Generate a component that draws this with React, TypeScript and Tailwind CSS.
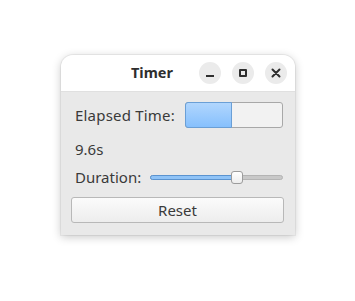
import React from "react";

export default function App() {
  return (
    <div className="w-[355px] h-[301px] bg-white pt-[55px] pl-[61px]" style={{ fontFamily: '"Noto Sans", "DejaVu Sans", sans-serif' }}>
      <div className="w-[234px] h-[180px] rounded-t-[12px] bg-[#e9e9e9] shadow-[0_2px_10px_rgba(0,0,0,0.22),0_0_0_1px_rgba(0,0,0,0.05)] flex flex-col overflow-hidden">
        <div className="h-[36px] bg-white flex items-center relative shrink-0">
          <div className="absolute left-0 right-0 text-center pr-[52px] text-[14.5px] font-bold text-[#2e2e2e]">Timer</div>
          <div className="ml-auto flex items-center gap-[11px] pr-[8px] relative">
            <div className="w-[22px] h-[22px] rounded-full bg-[#ebebeb] flex items-center justify-center">
              <div className="w-[8px] h-[2px] bg-[#2e2e2e] mt-[5px]"></div>
            </div>
            <div className="w-[22px] h-[22px] rounded-full bg-[#ebebeb] flex items-center justify-center">
              <div className="w-[8px] h-[8px] border-[2px] border-[#2e2e2e] rounded-[1px]"></div>
            </div>
            <div className="w-[22px] h-[22px] rounded-full bg-[#ebebeb] flex items-center justify-center">
              <svg width="10" height="10" viewBox="0 0 10 10">
                <path d="M1.5 1.5 L8.5 8.5 M8.5 1.5 L1.5 8.5" stroke="#2e2e2e" strokeWidth="2" strokeLinecap="round" />
              </svg>
            </div>
          </div>
        </div>
        <div className="h-[1px] bg-[#e0e0e0]"></div>
        <div className="flex flex-col pl-[10px] pr-[11px] pt-[10px] text-[#3a3a3a] text-[15px]">
          <div className="flex items-center h-[26px] pl-[4px]">
            <span className="w-[110px] tracking-[0.2px]">Elapsed Time:</span>
            <div className="relative w-[98px] h-[26px] rounded-[3px] border border-[#a8a8a8] bg-[#f2f2f2]">
              <div className="absolute -left-[1px] -top-[1px] -bottom-[1px] w-[47px] rounded-l-[3px] bg-gradient-to-b from-[#b1d6fd] to-[#86c0fd] border border-[#6a9fd6]"></div>
            </div>
          </div>
          <div className="h-[20px] mt-[11px] pl-[4px] flex items-center">9.6s</div>
          <div className="h-[20px] mt-[8px] pl-[4px] flex items-center">
            <span className="w-[75px]">Duration:</span>
            <div className="relative w-[133px] h-[13px] flex items-center">
              <div className="w-full h-[5px] rounded-full bg-[#c8c8c8] border border-[#b4b4b4]"></div>
              <div className="absolute left-0 w-[84px] h-[5px] rounded-full bg-[#8fc3f7] border border-[#5b93cf]"></div>
              <div className="absolute left-[81px] top-0 w-[12px] h-[13px] rounded-[3px] bg-gradient-to-b from-[#ffffff] to-[#ededed] border border-[#9c9c9c]"></div>
            </div>
          </div>
          <div className="mt-[10px] h-[26px] w-[213px] rounded-[3px] border border-[#b8b8b8] bg-gradient-to-b from-[#fbfbfb] to-[#ededed] flex items-center justify-center text-[#3a3a3a]">
            Reset
          </div>
        </div>
      </div>
    </div>
  );
}
